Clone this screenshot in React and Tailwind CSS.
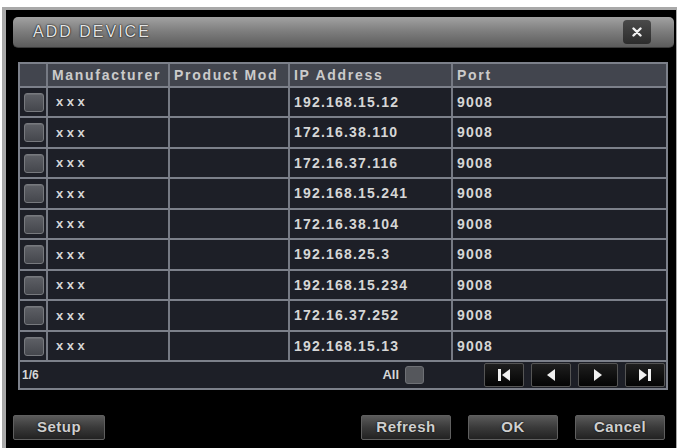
import React from 'react';

const rows = [
    ['xxx', '', '192.168.15.12', '9008'],
    ['xxx', '', '172.16.38.110', '9008'],
    ['xxx', '', '172.16.37.116', '9008'],
    ['xxx', '', '192.168.15.241', '9008'],
    ['xxx', '', '172.16.38.104', '9008'],
    ['xxx', '', '192.168.25.3', '9008'],
    ['xxx', '', '192.168.15.234', '9008'],
    ['xxx', '', '172.16.37.252', '9008'],
    ['xxx', '', '192.168.15.13', '9008'],
];

const cols = "grid grid-cols-[28px_122px_120px_163px_1fr]";
const cell = "border-r-2 border-[#767a84] flex items-center pl-[4px]";

function Check() {
    return (
        <div className="w-[20px] h-[19px] rounded-[3px] bg-gradient-to-b from-[#5e6066] to-[#45474d] border border-[#77797e] shadow-[inset_0_1px_0_#6c6e73]" />
    );
}

function NavBtn({ children }) {
    return (
        <button className="w-[40px] h-[24px] bg-gradient-to-b from-[#1f1f1f] to-[#050505] border border-[#555555] rounded-[2px] flex items-center justify-center">
            {children}
        </button>
    );
}

function Btn({ children, className = '' }) {
    return (
        <button className={"h-[25px] w-[90px] rounded-[2px] border border-[#5f5f5f] bg-gradient-to-b from-[#5a5a5a] via-[#3a3a3a] to-[#222222] text-[15px] font-bold tracking-[0.5px] text-[#cfcfcf] [text-shadow:0_0_2px_#000] flex items-center justify-center " + className}>
            {children}
        </button>
    );
}

export default function App() {
    return (
        <div className="w-[679px] h-[448px] bg-white pt-[7px] px-[2px] overflow-hidden font-['Liberation_Sans',Arial,sans-serif]">
            <div className="h-full bg-black border-l-4 border-t-[3px] border-r border-[#a9a9a9] flex flex-col">

                {/* title bar */}
                <div className="mt-[7px] ml-[7px] mr-[2px] h-[31px] rounded-[5px] bg-gradient-to-b from-[#a2a2a2] via-[#7c7c7c] to-[#5c5c5c] border-b border-[#3a3a3a] flex items-center justify-between pl-[20px] pr-[23px]">
                    <span className="text-[16px] tracking-[2px] text-[#e4e4e4] [text-shadow:0_0_2px_#111,0_0_1px_#000]">ADD DEVICE</span>
                    <div className="w-[28px] h-[24px] rounded-[4px] bg-gradient-to-b from-[#4a4a4a] to-[#2c2c2c] flex items-center justify-center">
                        <svg width="10" height="10" viewBox="0 0 10 10">
                            <path d="M1.5 1.5 L8.5 8.5 M8.5 1.5 L1.5 8.5" stroke="#f2f2f2" strokeWidth="2.4" strokeLinecap="round" />
                        </svg>
                    </div>
                </div>

                {/* table */}
                <div className="mt-[14px] ml-[12px] w-[650px] border-t-2 border-x-2 border-[#7c808a] text-[14px] tracking-[1.2px] text-[#d6d6d6] font-bold">
                    <div className={cols + " h-[24px] bg-[#42454e] border-b-2 border-[#7c808a] text-[#cbcbcb] tracking-[1.7px]"}>
                        <div className={cell}></div>
                        <div className={cell + " whitespace-nowrap overflow-hidden"}>Manufacturer</div>
                        <div className={cell + " whitespace-nowrap overflow-hidden"}>Product Mod</div>
                        <div className={cell}>IP Address</div>
                        <div className="flex items-center pl-[4px]">Port</div>
                    </div>
                    {rows.map((r, i) => (
                        <div key={i} className={cols + " bg-[#1d1f27] border-b-2 border-[#7c808a] " + (i % 2 ? "h-[31px]" : "h-[30px]")}>
                            <div className={cell + " pl-[2px]"}><Check /></div>
                            <div className={cell + " pl-[8px] tracking-[3.5px] text-[13px]"}>{r[0]}</div>
                            <div className={cell}>{r[1]}</div>
                            <div className={cell}>{r[2]}</div>
                            <div className="flex items-center pl-[4px]">{r[3]}</div>
                        </div>
                    ))}
                    <div className="h-[28px] bg-[#1d1f27] border-b-2 border-[#7c808a] flex items-center pl-[2px] pr-[1px]">
                        <span className="text-[12px] tracking-[0px]">1/6</span>
                        <div className="flex-1" />
                        <span className="text-[13px] tracking-[0px] mr-[6px]">All</span>
                        <div className="w-[19px] h-[18px] rounded-[3px] bg-[#55575c] border border-[#6e7075]" />
                        <div className="ml-[60px] flex gap-[7px]">
                            <NavBtn>
                                <svg width="14" height="12" viewBox="0 0 14 12"><rect x="1" y="0" width="3" height="12" fill="#f0f0f0" /><path d="M13 0 L5 6 L13 12 Z" fill="#f0f0f0" /></svg>
                            </NavBtn>
                            <NavBtn>
                                <svg width="10" height="12" viewBox="0 0 10 12"><path d="M9 0 L1 6 L9 12 Z" fill="#f0f0f0" /></svg>
                            </NavBtn>
                            <NavBtn>
                                <svg width="10" height="12" viewBox="0 0 10 12"><path d="M1 0 L9 6 L1 12 Z" fill="#f0f0f0" /></svg>
                            </NavBtn>
                            <NavBtn>
                                <svg width="14" height="12" viewBox="0 0 14 12"><path d="M1 0 L9 6 L1 12 Z" fill="#f0f0f0" /><rect x="10" y="0" width="3" height="12" fill="#f0f0f0" /></svg>
                            </NavBtn>
                        </div>
                    </div>
                </div>

                {/* bottom buttons */}
                <div className="mt-[25px] ml-[7px] mr-[11px] flex items-center">
                    <Btn className="w-[92px]">Setup</Btn>
                    <div className="flex-1" />
                    <div className="flex gap-[17px]">
                        <Btn>Refresh</Btn>
                        <Btn>OK</Btn>
                        <Btn>Cancel</Btn>
                    </div>
                </div>
            </div>
        </div>
    );
}
